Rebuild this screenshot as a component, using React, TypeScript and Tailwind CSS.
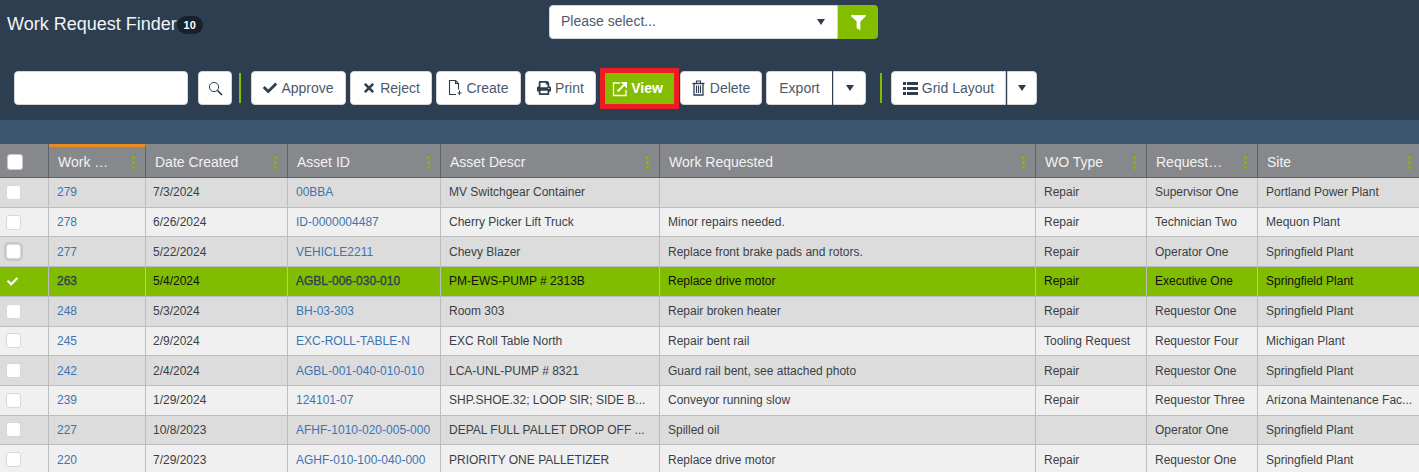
import React from "react";
import { FaCheck, FaTimes, FaPrint, FaFilter } from "react-icons/fa";

const cols = "grid grid-cols-[49px_97px_142px_153px_219px_376px_111px_111px_161px]";
const headers = ["Work …", "Date Created", "Asset ID", "Asset Descr", "Work Requested", "WO Type", "Request…", "Site"];
const rows = [
  ["279", "7/3/2024", "00BBA", "MV Switchgear Container", "", "Repair", "Supervisor One", "Portland Power Plant"],
  ["278", "6/26/2024", "ID-0000004487", "Cherry Picker Lift Truck", "Minor repairs needed.", "Repair", "Technician Two", "Mequon Plant"],
  ["277", "5/22/2024", "VEHICLE2211", "Chevy Blazer", "Replace front brake pads and rotors.", "Repair", "Operator One", "Springfield Plant"],
  ["263", "5/4/2024", "AGBL-006-030-010", "PM-EWS-PUMP # 2313B", "Replace drive motor", "Repair", "Executive One", "Springfield Plant"],
  ["248", "5/3/2024", "BH-03-303", "Room 303", "Repair broken heater", "Repair", "Requestor One", "Springfield Plant"],
  ["245", "2/9/2024", "EXC-ROLL-TABLE-N", "EXC Roll Table North", "Repair bent rail", "Tooling Request", "Requestor Four", "Michigan Plant"],
  ["242", "2/4/2024", "AGBL-001-040-010-010", "LCA-UNL-PUMP # 8321", "Guard rail bent, see attached photo", "Repair", "Requestor One", "Springfield Plant"],
  ["239", "1/29/2024", "124101-07", "SHP.SHOE.32; LOOP SIR; SIDE B...", "Conveyor running slow", "Repair", "Requestor Three", "Arizona Maintenance Fac..."],
  ["227", "10/8/2023", "AFHF-1010-020-005-000", "DEPAL FULL PALLET DROP OFF ...", "Spilled oil", "", "Operator One", "Springfield Plant"],
  ["220", "7/29/2023", "AGHF-010-100-040-000", "PRIORITY ONE PALLETIZER", "Replace drive motor", "Repair", "Requestor One", "Springfield Plant"],
];

function Btn({ children, className = "" }: { children: React.ReactNode; className?: string }) {
  return (
    <div className={"h-[34px] flex items-center justify-center gap-[4px] bg-white border border-[#d5d5d5] rounded-[4px] text-[14px] text-[#4a5a6c] " + className}>
      {children}
    </div>
  );
}

function Caret() {
  return <span className="block w-0 h-0 border-l-[4px] border-r-[4px] border-t-[6px] border-l-transparent border-r-transparent border-t-[#2c3e50]" />;
}

function Divider() {
  return <div className="w-[2px] h-[30px] mt-[2px] bg-[#84bd00]" />;
}

function SearchIcon() {
  return (
    <svg width="15" height="15" viewBox="0 0 15 15" fill="none" stroke="#2c3e50">
      <circle cx="6" cy="6" r="4.600" strokeWidth="1" />
      <path d="M9.500 9.500L14 14" strokeWidth="1.700" />
    </svg>
  );
}

function CreateIcon() {
  return (
    <svg width="14" height="16" viewBox="0 0 14 16" fill="none" stroke="#2c3e50" strokeWidth="1.100">
      <path d="M8 14.500H1.500v-14h6l3 3v6" />
      <path d="M7.500 .5v3h3" />
      <path d="M11.500 10.500v4.500M9.500 13h4" />
    </svg>
  );
}

function ViewIcon() {
  return (
    <svg width="16" height="16" viewBox="0 0 16 16" fill="none" stroke="white">
      <path d="M8 2H1.500v12.500h12.500V9" strokeWidth="1.300" />
      <path d="M5.500 10.500L12 4" strokeWidth="2.200" />
      <path d="M8.500 1h6.500v6.500z" fill="white" stroke="none" />
    </svg>
  );
}

function TrashIcon() {
  return (
    <svg width="13" height="16" viewBox="0 0 13 16" fill="none" stroke="#2c3e50" strokeWidth="1.100">
      <path d="M.5 3.500h12" strokeWidth="1.400" />
      <path d="M4.500 3V1h4v2" />
      <path d="M2 3.500V15h9V3.500" strokeWidth="1.300" />
      <path d="M4.500 5.500v7.500M6.500 5.500v7.500M8.500 5.500v7.500" />
    </svg>
  );
}

function ListIcon() {
  return (
    <svg width="15" height="13" viewBox="0 0 15 13" fill="#2c3e50">
      <path d="M0 0h3v3H0zM4 0h11v3H4zM0 5h3v3H0zM4 5h11v3H4zM0 10h3v3H0zM4 10h11v3H4z" />
    </svg>
  );
}

function Dots({ className = "mr-[10px]" }: { className?: string }) {
  return (
    <span className={"flex flex-col gap-[2px] ml-auto " + className}>
      <i className="block w-[3px] h-[3px] rounded-full bg-[#84bd00]" />
      <i className="block w-[3px] h-[3px] rounded-full bg-[#84bd00]" />
      <i className="block w-[3px] h-[3px] rounded-full bg-[#84bd00]" />
    </span>
  );
}

export default function App() {
  return (
    <div className="w-[1419px] h-[472px] overflow-hidden bg-[#f0f0f0] font-['Liberation_Sans',Arial,sans-serif]">
      <div className="h-[120px] bg-[#2c3e50] pt-[5px]">
        <div className="flex h-[34px]">
          <div className="w-[549px] pl-[7px] flex items-start pt-[7px] shrink-0">
            <span className="text-[18px] leading-[24px] text-[#f2f4f6]">Work Request Finder</span>
            <span className="mt-[4px] h-[18px] w-[26px] rounded-full bg-[#17212b] text-white text-[11px] font-bold flex items-center justify-center">10</span>
          </div>
          <div className="w-[289px] bg-white border border-[#d5d5d5] rounded-l-[4px] flex items-center pl-[11px] pr-[12px] text-[14px] text-[#4a5a6c]">
            <span className="-translate-y-[1px]">Please select...</span>
            <span className="ml-auto"><Caret /></span>
          </div>
          <div className="w-[40px] bg-[#84bd00] rounded-r-[4px] flex items-center justify-center">
            <FaFilter size={15} color="white" />
          </div>
        </div>
        <div className="flex items-start h-[41px] mt-[29px] pt-[3px] pl-[14px]">
          <div className="w-[174px] h-[34px] bg-white border border-[#d5d5d5] rounded-[4px]" />
          <Btn className="w-[34px] ml-[10px]"><SearchIcon /></Btn>
          <div className="ml-[7px]"><Divider /></div>
          <Btn className="w-[95px] ml-[10px]"><FaCheck size={14} color="#2c3e50" /><span>Approve</span></Btn>
          <Btn className="w-[82px] ml-[4px]"><FaTimes size={14} color="#2c3e50" /><span>Reject</span></Btn>
          <Btn className="w-[85px] ml-[4px]"><CreateIcon /><span>Create</span></Btn>
          <Btn className="w-[71px] ml-[4px]"><FaPrint size={14} color="#2c3e50" /><span>Print</span></Btn>
          <div className="ml-[4px] -mt-[3px] w-[79px] h-[41px] border-[5px] border-[#ed1c24] shrink-0">
            <div className="h-full bg-[#84bd00] flex items-center justify-center gap-[3px] pr-[4px] text-white text-[14px] font-bold">
              <ViewIcon /><span>View</span>
            </div>
          </div>
          <Btn className="w-[82px] ml-[1px] gap-[5px]"><TrashIcon /><span>Delete</span></Btn>
          <Btn className="w-[66px] ml-[4px] rounded-r-none border-r-0"><span>Export</span></Btn>
          <Btn className="w-[33px] ml-[1px] rounded-l-none"><Caret /></Btn>
          <div className="ml-[14px]"><Divider /></div>
          <Btn className="w-[115px] ml-[9px] rounded-r-none"><ListIcon /><span>Grid Layout</span></Btn>
          <Btn className="w-[30px] ml-[1px] rounded-l-none"><Caret /></Btn>
        </div>
      </div>
      <div className="h-[24px] bg-[#3c556f]" />
      <div className={cols + " h-[34px] bg-[#87888c] border-b border-[#5f6068]"}>
        <div className="flex items-center pl-[7px] pt-[3px] border-r border-[#5f6068]">
          <span className="w-[16px] h-[16px] bg-white rounded-[3px] border border-[#c8c8c8]" />
        </div>
        {headers.map((h, i) => (
          <div
            key={h}
            className={
              "flex items-center pl-[9px] text-[14px] text-[#f2f2f2] border-r border-[#5f6068] last:border-r-0 " +
              (i === 0 ? "border-t-[3px] border-t-[#ed8a1f]" : "pt-[3px]")
            }
          >
            <span>{h}</span>
            <Dots className={i === 7 ? "mr-[8px]" : "mr-[10px]"} />
          </div>
        ))}
      </div>
      {rows.map((r, ri) => {
        const sel = ri === 3;
        const bg = sel ? "bg-[#80bc00]" : ri % 2 === 0 ? "bg-[#dcdcdc]" : "bg-[#f0f0f0]";
        return (
          <div key={r[0]} className={cols + " h-[29.71px] border-b border-[#bdbdbd] text-[12px] text-[#3a3f46] " + bg}>
            <div className="flex items-center pl-[6px] border-r border-[#bdbdbd]">
              {sel ? (
                <FaCheck size={11} color="white" className="ml-[1px]" />
              ) : (
                <span className={"w-[15px] h-[15px] bg-white rounded-[3px] border border-[#d8d8d8] " + (ri === 2 ? "shadow-[0_0_0_2px_#c8c8c8]" : "")} />
              )}
            </div>
            {r.map((c, i) => (
              <div
                key={i}
                className={
                  "flex items-center whitespace-nowrap overflow-hidden border-r border-[#bdbdbd] last:border-r-0 " +
                  (i === 1 ? "pl-[7px] " : "pl-[8px] ") +
                  (i === 0 || i === 2 ? (sel ? "text-[#2c3e50] [-webkit-text-stroke:0.3px_#2c3e50]" : "text-[#3d74b0]") : sel ? "text-[#111111]" : "")
                }
              >
                {c}
              </div>
            ))}
          </div>
        );
      })}
    </div>
  );
}
